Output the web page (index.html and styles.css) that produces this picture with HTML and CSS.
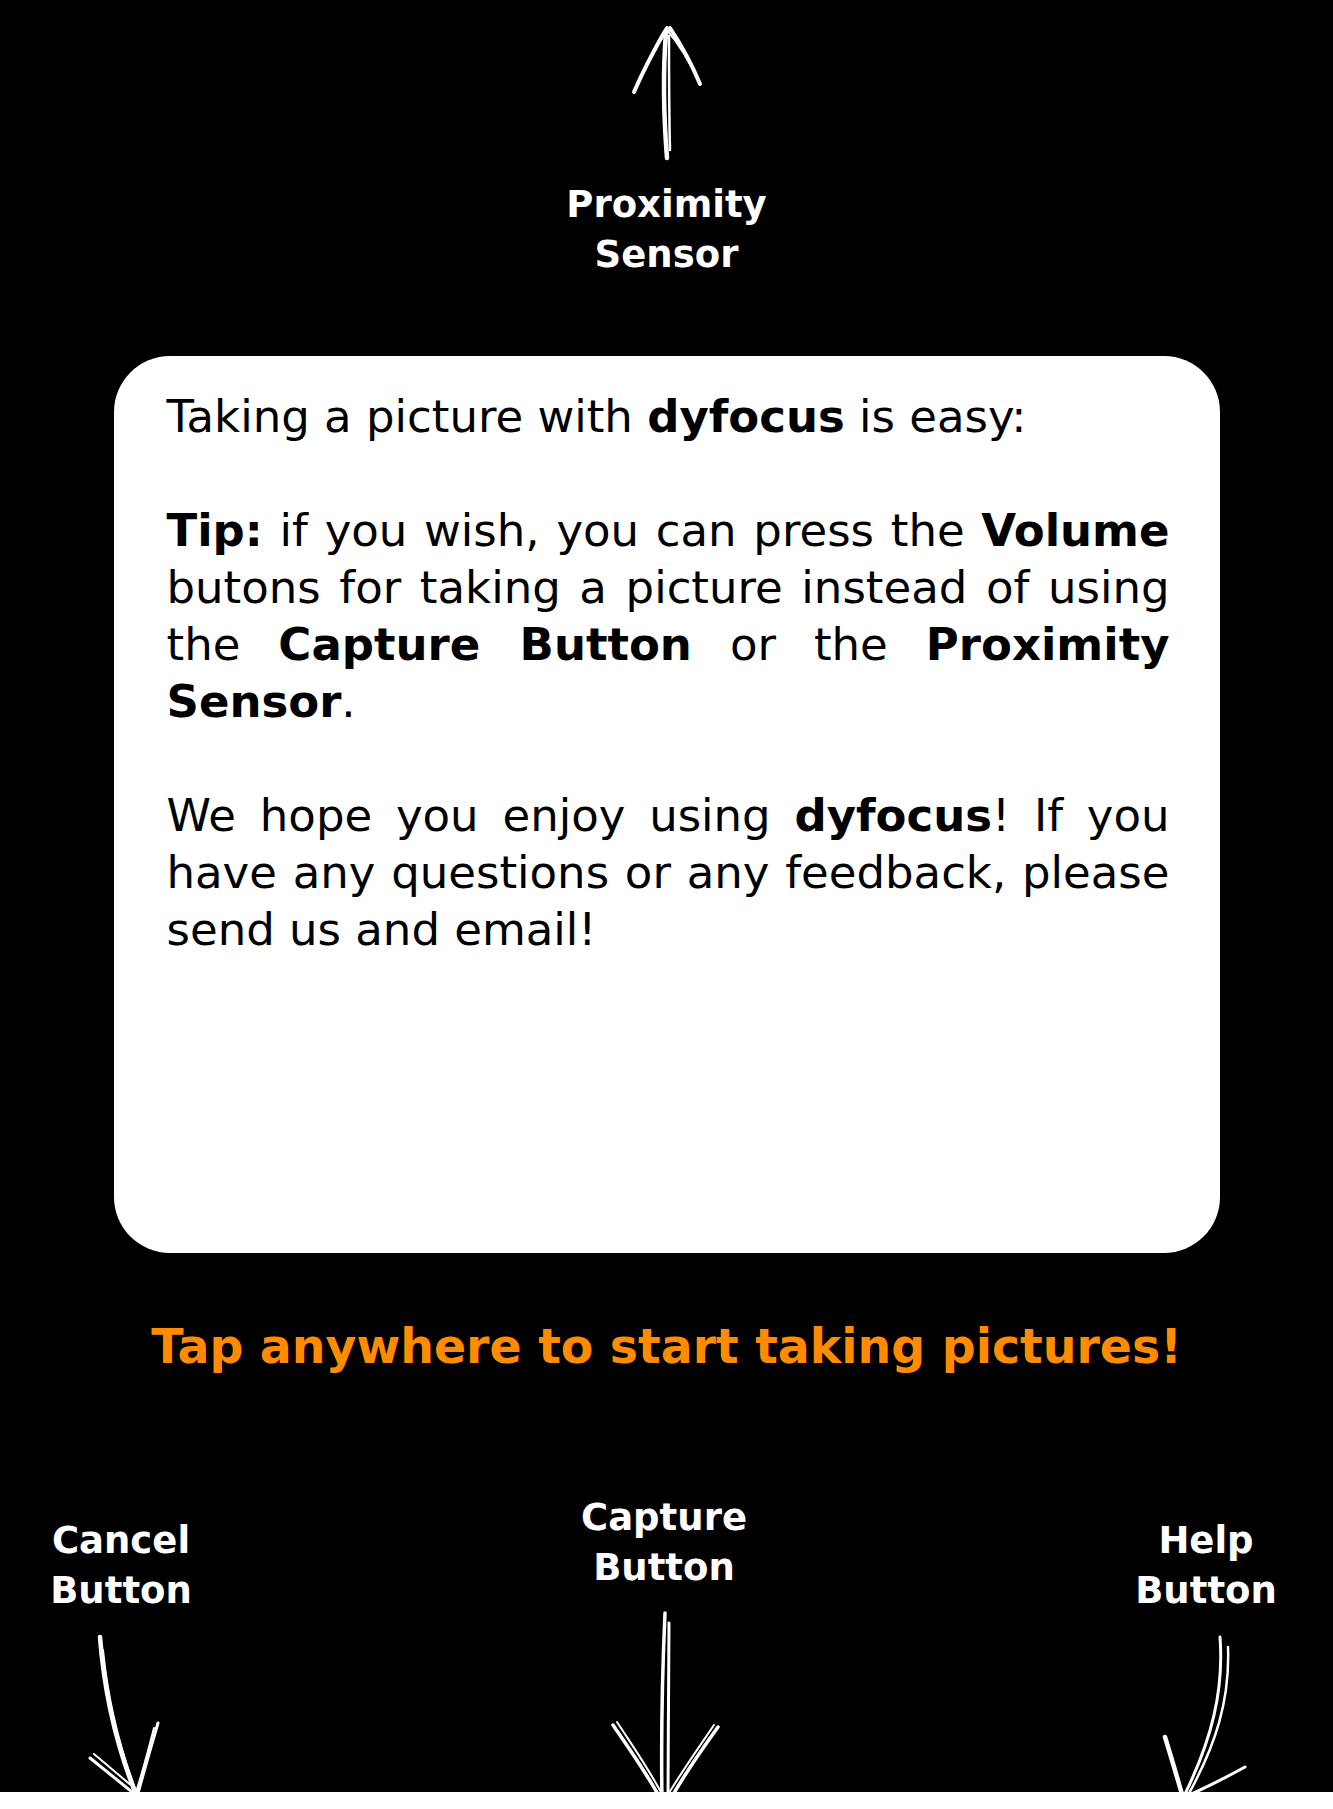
FILE: index.html
```html
<!DOCTYPE html>
<html lang="en">
<head>
<meta charset="utf-8">
<title>dyfocus tips</title>
<link rel="stylesheet" href="styles.css">
</head>
<body>
<div class="screen">
  <div class="top-hint">
    <svg class="arrow arrow-up" width="85" height="142" viewBox="624 20 85 142" fill="none" stroke="#fff" stroke-linecap="round" stroke-linejoin="round">
      <path d="M667,158 C664,120 663,70 666,32" stroke-width="4.5"/>
      <path d="M670,150 C669,110 669,70 669,36" stroke-width="2.5"/>
      <path d="M634,92 Q648,60 667,28" stroke-width="4"/>
      <path d="M637,84 Q652,52 664,31" stroke-width="2"/>
      <path d="M700,84 Q688,55 670,28" stroke-width="4"/>
      <path d="M697,78 Q684,50 667,30" stroke-width="2"/>
      <path d="M661,38 Q668,24 675,36" stroke-width="2"/>
    </svg>
    <div class="label">Proximity<br>Sensor</div>
  </div>

  <div class="card">
    <p>Taking a picture with <b>dyfocus</b> is easy:</p>
    <p><b>Tip:</b> if you wish, you can press the <b>Volume</b> butons for taking a picture instead of using the <b>Capture Button</b> or the <b>Proximity Sensor</b>.</p>
    <p>We hope you enjoy using <b>dyfocus</b>! If you have any questions or any feedback, please send us and email!</p>
  </div>

  <div class="tap">Tap anywhere to start taking pictures!</div>

  <div class="bottom">
    <div class="hint hint-cancel">
      <div class="label">Cancel<br>Button</div>
      <svg class="arrow" width="140" height="176" viewBox="51 1616 140 176" fill="none" stroke="#fff" stroke-linecap="round" stroke-linejoin="round">
        <path d="M100,1637 C104,1690 116,1745 137,1797" stroke-width="4.5"/>
        <path d="M103,1650 C108,1700 120,1750 138,1796" stroke-width="2"/>
        <path d="M90,1758 L137,1796" stroke-width="3"/>
        <path d="M94,1754 L139,1792" stroke-width="2"/>
        <path d="M158,1723 C150,1750 143,1775 137,1797" stroke-width="3"/>
        <path d="M154,1728 C147,1755 141,1778 135,1795" stroke-width="2"/>
      </svg>
    </div>
    <div class="hint hint-capture">
      <div class="label">Capture<br>Button</div>
      <svg class="arrow" width="168" height="199" viewBox="580 1593 168 199" fill="none" stroke="#fff" stroke-linecap="round" stroke-linejoin="round">
        <path d="M665,1613 C662,1680 661,1740 662,1800" stroke-width="3.5"/>
        <path d="M669,1623 C669,1690 668,1740 668,1800" stroke-width="3"/>
        <path d="M613,1725 C630,1750 648,1775 661,1800" stroke-width="3.5"/>
        <path d="M617,1722 C634,1748 651,1772 664,1798" stroke-width="2"/>
        <path d="M718,1727 C700,1752 684,1775 670,1800" stroke-width="3.5"/>
        <path d="M714,1725 C697,1750 680,1774 666,1798" stroke-width="2"/>
      </svg>
    </div>
    <div class="hint hint-help">
      <div class="label">Help<br>Button</div>
      <svg class="arrow" width="138" height="176" viewBox="1137 1616 138 176" fill="none" stroke="#fff" stroke-linecap="round" stroke-linejoin="round">
        <path d="M1220,1637 C1224,1690 1212,1740 1183,1798" stroke-width="3"/>
        <path d="M1228,1647 C1230,1700 1216,1745 1187,1797" stroke-width="2.5"/>
        <path d="M1165,1737 C1172,1760 1178,1780 1183,1798" stroke-width="4.5"/>
        <path d="M1245,1767 C1225,1778 1205,1788 1187,1796" stroke-width="3"/>
      </svg>
    </div>
  </div>
</div>
</body>
</html>
```

FILE: styles.css
```css
html, body {
  margin: 0;
  padding: 0;
  background: #fff;
}

.screen {
  width: 1333px;
  height: 1792px;
  background: #000;
  overflow: hidden;
  display: flex;
  flex-direction: column;
  align-items: center;
  font-family: "DejaVu Sans", "Liberation Sans", sans-serif;
}

.arrow {
  display: block;
  overflow: visible;
}

.top-hint {
  display: flex;
  flex-direction: column;
  align-items: center;
}

.arrow-up {
  margin-top: 20px;
}

.label {
  color: #fff;
  font-weight: bold;
  font-size: 37px;
  line-height: 50px;
  text-align: center;
  white-space: nowrap;
}

.top-hint .label {
  margin-top: 18px;
}

.card {
  box-sizing: border-box;
  width: 1106px;
  height: 897px;
  margin-top: 76px;
  padding: 32px 50px 0 53px;
  background: #fff;
  border-radius: 56px;
  color: #000;
  font-size: 45px;
  line-height: 57px;
  text-align: justify;
}

.card p {
  margin: 0 0 57px 0;
}

.card b {
  font-weight: bold;
}

.tap {
  margin-top: 66px;
  color: #ff8c00;
  font-weight: bold;
  font-size: 47.4px;
  line-height: 56px;
  white-space: nowrap;
}

.bottom {
  align-self: stretch;
  flex: 1;
  display: flex;
  justify-content: space-between;
  padding: 0 58px 0 51px;
}

.hint {
  display: flex;
  flex-direction: column;
  align-items: center;
}

.hint-cancel {
  width: 140px;
  padding-top: 141px;
}

.hint-capture {
  width: 168px;
  padding-top: 118px;
}

.hint-help {
  width: 138px;
  padding-top: 141px;
}
```
